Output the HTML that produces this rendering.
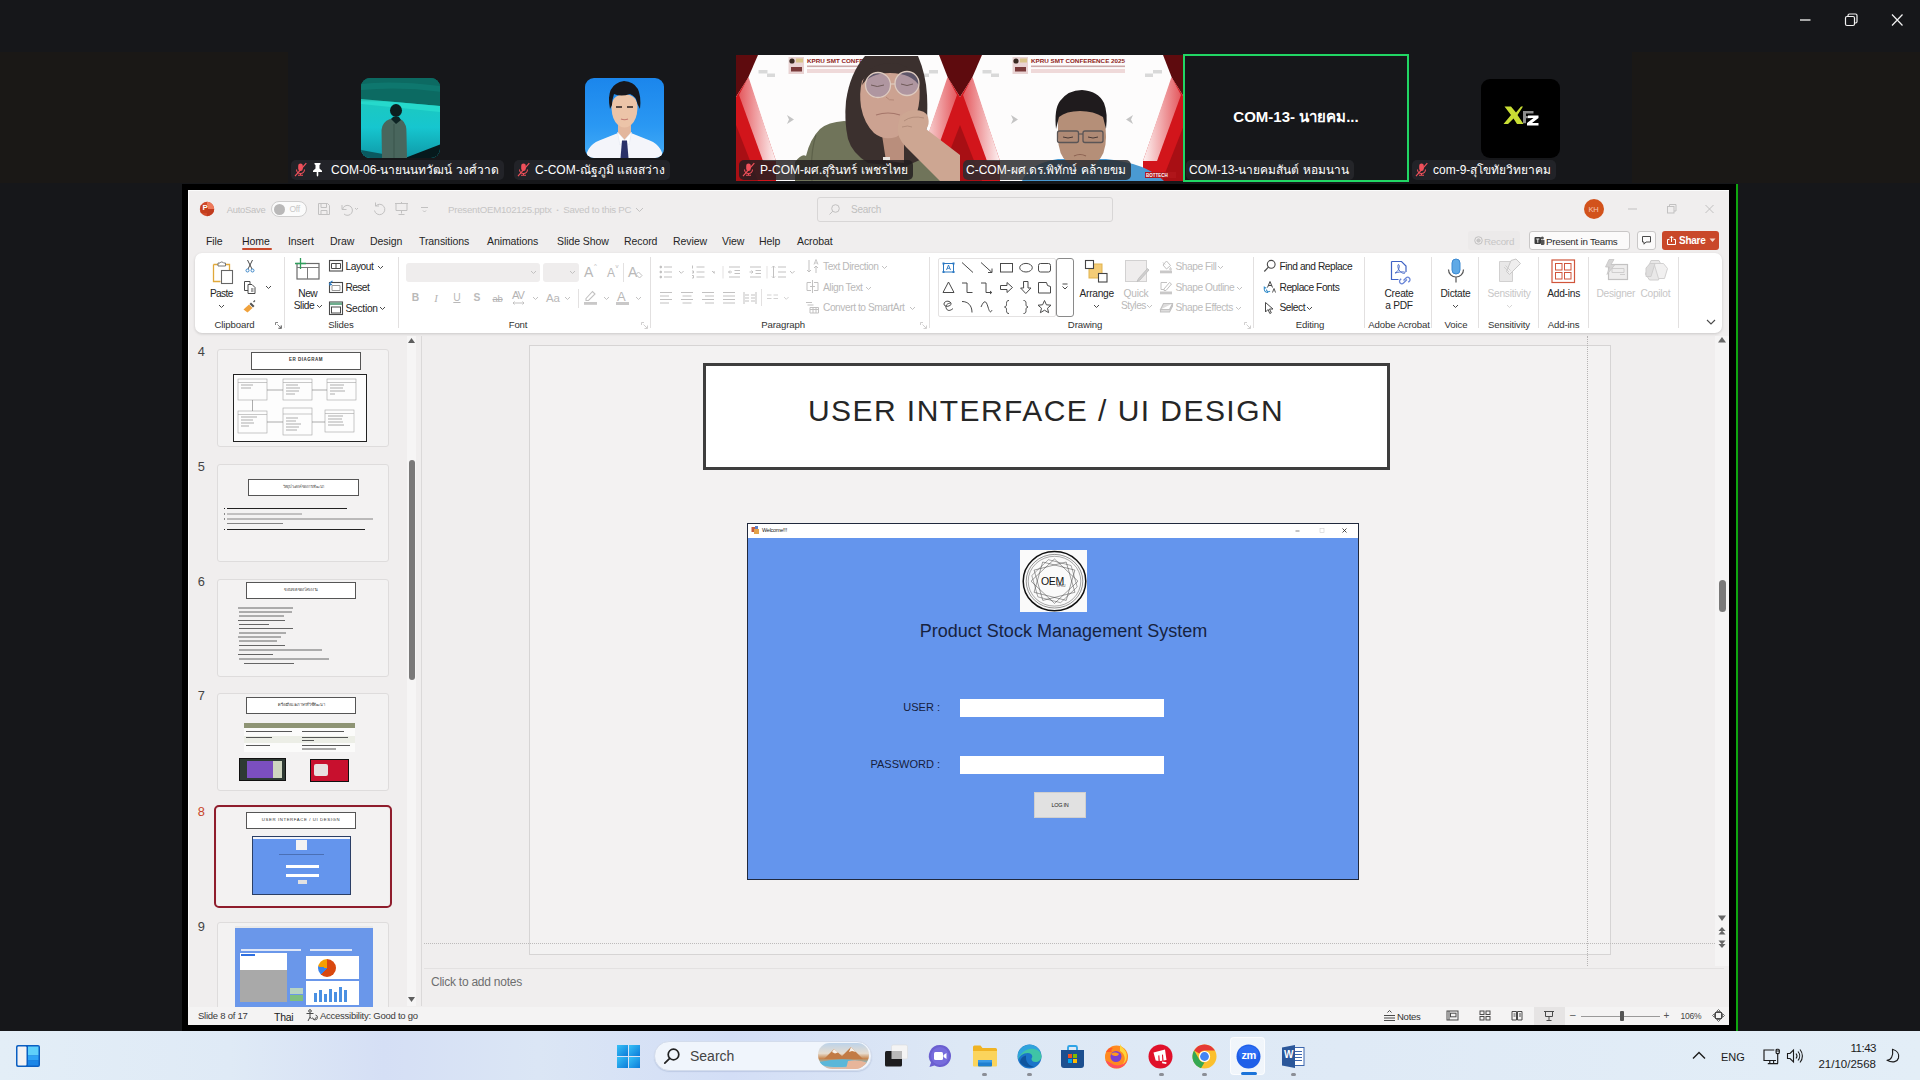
<!DOCTYPE html>
<html lang="th">
<head>
<meta charset="utf-8">
<title>Zoom Meeting</title>
<style>
*{box-sizing:border-box;margin:0;padding:0}
html,body{width:1920px;height:1080px;overflow:hidden;background:#16171a}
body{position:relative;font-family:"Liberation Sans","Noto Sans CJK SC",sans-serif;color:#222;-webkit-font-smoothing:antialiased}
.abs{position:absolute}
.t{position:absolute;white-space:nowrap;line-height:1}
svg{position:absolute;overflow:visible}
/* zoom */
.brown{position:absolute;background:#1a1816}
.nm{position:absolute;height:20px;border-radius:5px;background:rgba(36,37,41,.92);color:#fff;font-size:12px;line-height:20px;white-space:nowrap;padding:0 5px 0 3px}
.nm svg{position:relative;display:inline-block;vertical-align:-3px;margin-right:5px}
.av{position:absolute;width:80px;height:80px;border-radius:9px;overflow:hidden}
/* ppt */
#ppt{position:absolute;left:188px;top:190px;width:1541px;height:835px;background:#f0eeee;box-shadow:inset 1px 1px 0 #fbfbfb;overflow:hidden;font-size:10.5px;color:#2a2a2a}
#ppt .t{font-size:10.2px;color:#262626;letter-spacing:-.25px}
#ppt .g{color:#b9b8b8}
#ppt .lbl{color:#333;font-size:9.6px;letter-spacing:-.12px}
.sep{position:absolute;width:1px;background:#e2e0e0;top:67px;height:71px}
.ic{stroke:#4a4a4a;fill:none;stroke-width:1}
.icg{stroke:#c2c1c1;fill:none;stroke-width:1}
.thumb{position:absolute;left:29px;width:172px;height:98px;background:#f3f2f2;border:1px solid #dedcdc;border-radius:3px;overflow:hidden}
.tn{position:absolute;left:9.800px;font-size:12.800px;line-height:1;color:#444;margin-top:-.3px}
.c{transform:translateX(-50%)}
.chev{position:absolute;width:5px;height:5px}
/* taskbar */
#tb{position:absolute;left:0;top:1031px;width:1920px;height:49px;background:linear-gradient(90deg,#e3eef7 0%,#dfeaf6 12%,#d5dff5 20%,#dbe6f5 28%,#d3def6 38%,#dde8f5 50%,#dfeaf6 70%,#e3eef7 100%)}
#tb .t{color:#1b1b1b;font-size:12px}
</style>
</head>
<body>
<!-- ===== Zoom window chrome ===== -->
<div class="brown" style="left:0;top:52px;width:288px;height:131px"></div>
<div class="brown" style="left:1632px;top:52px;width:288px;height:131px"></div>
<svg style="left:1790px;top:8px" width="124" height="26" viewBox="0 0 124 26">
  <line x1="10" y1="12" x2="20.5" y2="12" stroke="#e6e6e6" stroke-width="1.4"/>
  <rect x="55.5" y="8.5" width="9" height="9" rx="1.5" fill="none" stroke="#f2f2f2" stroke-width="1.2"/>
  <path d="M58 8.5V7.5a1.5 1.5 0 0 1 1.5-1.5H65.5A1.5 1.5 0 0 1 67 7.500V13.5a1.500 1.500 0 0 1-1.500 1.500H64.500" fill="none" stroke="#f2f2f2" stroke-width="1.200"/>
  <path d="M102 6.500 112.500 17.500M112.500 6.500 102 17.500" stroke="#f2f2f2" stroke-width="1.200"/>
</svg>

<!-- tile 1 : aquarium avatar -->
<div class="av" style="left:361px;top:78px;width:79px;background:#0c6a62">
  <svg style="left:0;top:0" width="80" height="80" viewBox="0 0 80 80">
    <defs><linearGradient id="aq" x1="0" y1="0" x2="0" y2="1"><stop offset="0" stop-color="#0b5f59"/><stop offset=".28" stop-color="#0f8076"/><stop offset=".3" stop-color="#1cc9c0"/><stop offset=".62" stop-color="#16c6cf"/><stop offset="1" stop-color="#0f9aa8"/></linearGradient></defs>
    <rect width="80" height="80" fill="url(#aq)"/>
    <path d="M0 0H80V28L0 21Z" fill="#0c6a62"/><path d="M0 6Q30 2 80 8V14Q40 8 0 12Z" fill="#118176" opacity=".6"/>
    <path d="M0 21 80 28V34L0 26Z" fill="#2be0d0" opacity=".7"/>
    <path d="M0 72 44 80H0Z" fill="#0a5a60"/><path d="M44 80 80 66V80Z" fill="#06191c"/>
    <ellipse cx="35" cy="32.500" rx="6" ry="6.500" fill="#0c1f1f"/>
    <path d="M21 80 20.500 52Q21 44 29 41L35 40 41 42Q46 46 45.500 56L46 80Z" fill="#49665d"/>
    <path d="M30 41 35 46 40 42 38 39H32Z" fill="#0e2424"/><path d="M33 46V80" stroke="#3a544d" stroke-width="1"/>
  </svg>
</div>
<div class="nm" style="left:291px;top:160px"><svg width="13" height="15" viewBox="0 0 13 15"><rect x="4.200" y="1.500" width="4.600" height="7.600" rx="2.300" fill="#f0505a"/><path d="M2.500 7.500a4 4 0 0 0 8 0M6.500 11.500v1.600M4 13.300h5" fill="none" stroke="#f0505a" stroke-width="1.100"/><path d="M1 14.200L12.300 1.200" stroke="#f0505a" stroke-width="1.200"/></svg><svg width="11" height="15" viewBox="0 0 11 15" style="margin-right:8px"><path d="M2.500 1h6v1.200l-1 .9v3.400l2.500 2.300v1.200H6.300v3.500l-.8 1.200-.8-1.200V10H1V8.800l2.500-2.300V3.100l-1-.9z" fill="#fff"/></svg>COM-06-นายนนทวัฒน์ วงศ์วาด</div>

<!-- tile 2 : ID photo avatar -->
<div class="av" style="left:585px;top:78px;width:79px;background:linear-gradient(180deg,#1b86ec 0%,#2a98f3 60%,#43abf6 100%)">
  <svg style="left:0;top:0" width="80" height="80" viewBox="0 0 80 80">
    <path d="M1 80Q2 66 18 61L33 55H46L61 61Q77 66 78 80Z" fill="#f4f5fa"/>
    <path d="M33 44H46V55L39.500 62 33 55Z" fill="#e3b79d"/>
    <path d="M26.500 30Q26 17 39.500 16 53 17 52.500 30 52 42 46 47 39.500 52 33 47 27 42 26.500 30Z" fill="#ecc4a8"/>
    <path d="M25 31Q20 6 39 3 58 4 55 31L52.500 26Q51 18 45 16 36 19 29 16 27 22 27 27Z" fill="#17171c"/>
    <path d="M31 29h6M42 29h6" stroke="#2a2020" stroke-width="1.300"/><path d="M36 41q3.500 1.500 7 0" fill="none" stroke="#c47a70" stroke-width="1.200"/>
    <path d="M32.500 54 39.500 62 35 67ZM46.500 54 39.500 62 44 67Z" fill="#fff" stroke="#dfe2ee" stroke-width=".5"/>
    <path d="M37 62.500H42L43.500 80H35.500Z" fill="#2a3168"/>
  </svg>
</div>
<div class="nm" style="left:514px;top:160px"><svg width="13" height="15" viewBox="0 0 13 15"><rect x="4.200" y="1.500" width="4.600" height="7.600" rx="2.300" fill="#f0505a"/><path d="M2.500 7.500a4 4 0 0 0 8 0M6.500 11.500v1.600M4 13.300h5" fill="none" stroke="#f0505a" stroke-width="1.100"/><path d="M1 14.200L12.300 1.200" stroke="#f0505a" stroke-width="1.200"/></svg>C-COM-ณัฐภูมิ แสงสว่าง</div>

<!-- tile 3 : video (woman) -->
<div class="abs" style="left:736px;top:55px;width:224px;height:126px;background:#fbfbfb;overflow:hidden">
  <svg style="left:0;top:0" width="224" height="126" viewBox="0 0 224 126">
    <defs><linearGradient id="pka" x1="0" y1="0" x2="1" y2="0"><stop offset="0" stop-color="#fdf3f3"/><stop offset="1" stop-color="#e4585d"/></linearGradient><linearGradient id="pkra" x1="1" y1="0" x2="0" y2="0"><stop offset="0" stop-color="#fdf3f3"/><stop offset="1" stop-color="#e4585d"/></linearGradient></defs>
    <rect width="224" height="126" fill="#fdfcfc"/>
    <path d="M0 0H22L12 23 0 42Z" fill="#5e0b0e"/><path d="M0 42 12 23 40 106V126H0Z" fill="#d2151b"/><path d="M3 40 12.500 22 40 106H27Z" fill="url(#pkra)"/><path d="M0 70 22 126H0Z" fill="#a80f14"/>
    <path d="M224 0H203L212 23 224 42Z" fill="#5e0b0e"/><path d="M224 42 212 23 183 106V126H224Z" fill="#d2151b"/><path d="M221 40 211.500 22 183 106H197Z" fill="url(#pka)"/><path d="M224 70 202 126H224Z" fill="#a80f14"/>
    <rect x="52.500" y="2" width="15.500" height="17" fill="#e9d3d3"/><circle cx="56" cy="6" r="2.600" fill="#3a2a22"/><rect x="60" y="3.500" width="7" height="4" fill="#d9c48a"/><rect x="55" y="12" width="11" height="4.500" fill="#7a3a3a"/>
    <text x="71" y="8.300" font-size="6.200" font-weight="700" fill="#8e1d20" font-family="Liberation Sans, sans-serif" textLength="94" lengthAdjust="spacingAndGlyphs">KPRU SMT CONFERENCE 2025</text>
    <rect x="71" y="10.500" width="94" height="1.600" fill="#caa"/><rect x="71" y="14" width="94" height="4" fill="#efd9d9"/>
    <rect x="22.500" y="15" width="9" height="3.500" fill="#d9d9d9"/><rect x="31" y="18.500" width="8" height="3.500" fill="#d9d9d9"/><rect x="193" y="15" width="9" height="3.500" fill="#d9d9d9"/><rect x="185" y="18.500" width="8" height="3.500" fill="#d9d9d9"/>
    <path d="M51 60l7 4.500-7 4.500 2-4.500z" fill="#c4c4c4"/>
    <!-- woman -->
    <path d="M59 126V107Q66 98 70 101 74 84 84 74 92 67 108 66L150 70 224 108V126Z" fill="#70745a"/>
    <path d="M80 80Q74 98 76 126" fill="none" stroke="#5d614a" stroke-width="1.200"/>
    <path d="M129 1H182Q190 20 191 40 192 60 190 78L186 104 168 112 132 108Q116 98 112 84 108 66 110 46 114 18 129 1Z" fill="#3b302e"/>
    <path d="M146 80H168V108L150 106Z" fill="#b98e7c"/><path d="M147 102h7v3h-7z" fill="#e9e6e2"/>
    <path d="M126 26Q134 14 154 15 176 14 183 28 185 44 181 58 174 76 160 82 148 86 138 78 128 68 125 52 123 38 126 26Z" fill="#cca291"/>
    <path d="M126 30Q130 8 156 8 180 10 184 32 176 18 154 18 134 18 126 30Z" fill="#3b302e"/>
    <path d="M140 60Q152 56 164 60" fill="none" stroke="#a5766a" stroke-width="1.200"/><path d="M150 42q3 4 8 3" fill="none" stroke="#b48878" stroke-width="1"/>
    <circle cx="142" cy="30" r="12.500" fill="#8c88b4" fill-opacity=".45" stroke="#decbc0" stroke-width="1.300"/><circle cx="171" cy="28.500" r="12" fill="#8c88b4" fill-opacity=".45" stroke="#decbc0" stroke-width="1.300"/><path d="M154.500 29h4.500" stroke="#decbc0" stroke-width="1.200"/>
    <path d="M135 30q6 3 13 0M165 29q6 3 12 0" fill="none" stroke="#6f5a58" stroke-width="1"/>
    <path d="M164 62Q168 56 178 55 190 55 192 62 194 70 190 74L224 100V126H204L170 92Q160 82 162 70Z" fill="#cda692"/>
    <path d="M168 66q8-6 20-3M166 72q6-2 10 0" fill="none" stroke="#b08a78" stroke-width=".9"/>
  </svg>
</div>
<div class="nm" style="left:739px;top:160px;background:rgba(34,30,32,.84)"><svg width="13" height="15" viewBox="0 0 13 15"><rect x="4.200" y="1.500" width="4.600" height="7.600" rx="2.300" fill="#f0505a"/><path d="M2.500 7.500a4 4 0 0 0 8 0M6.500 11.500v1.600M4 13.300h5" fill="none" stroke="#f0505a" stroke-width="1.100"/><path d="M1 14.200L12.300 1.200" stroke="#f0505a" stroke-width="1.200"/></svg>P-COM-ผศ.สุรินทร์ เพชรไทย</div>

<!-- tile 4 : video (man) -->
<div class="abs" style="left:960px;top:55px;width:223px;height:126px;background:#fbfbfb;overflow:hidden">
  <svg style="left:0;top:0" width="224" height="126" viewBox="0 0 224 126">
    <defs><linearGradient id="pkb" x1="0" y1="0" x2="1" y2="0"><stop offset="0" stop-color="#fdf3f3"/><stop offset="1" stop-color="#e4585d"/></linearGradient><linearGradient id="pkrb" x1="1" y1="0" x2="0" y2="0"><stop offset="0" stop-color="#fdf3f3"/><stop offset="1" stop-color="#e4585d"/></linearGradient></defs>
    <rect width="224" height="126" fill="#fdfcfc"/>
    <path d="M0 0H22L12 23 0 42Z" fill="#5e0b0e"/><path d="M0 42 12 23 40 106V126H0Z" fill="#d2151b"/><path d="M3 40 12.500 22 40 106H27Z" fill="url(#pkrb)"/><path d="M0 70 22 126H0Z" fill="#a80f14"/>
    <path d="M224 0H203L212 23 224 42Z" fill="#5e0b0e"/><path d="M224 42 212 23 183 106V126H224Z" fill="#d2151b"/><path d="M221 40 211.500 22 183 106H197Z" fill="url(#pkb)"/><path d="M224 70 202 126H224Z" fill="#a80f14"/>
    <rect x="52.500" y="2" width="15.500" height="17" fill="#e9d3d3"/><circle cx="56" cy="6" r="2.600" fill="#3a2a22"/><rect x="60" y="3.500" width="7" height="4" fill="#d9c48a"/><rect x="55" y="12" width="11" height="4.500" fill="#7a3a3a"/>
    <text x="71" y="8.300" font-size="6.200" font-weight="700" fill="#8e1d20" font-family="Liberation Sans, sans-serif" textLength="94" lengthAdjust="spacingAndGlyphs">KPRU SMT CONFERENCE 2025</text>
    <rect x="71" y="10.500" width="94" height="1.600" fill="#caa"/><rect x="71" y="14" width="94" height="4" fill="#efd9d9"/>
    <rect x="22.500" y="15" width="9" height="3.500" fill="#d9d9d9"/><rect x="31" y="18.500" width="8" height="3.500" fill="#d9d9d9"/><rect x="193" y="15" width="9" height="3.500" fill="#d9d9d9"/><rect x="185" y="18.500" width="8" height="3.500" fill="#d9d9d9"/>
    <path d="M51 60l7 4.500-7 4.500 2-4.500z" fill="#c4c4c4"/>
    <path d="M173 60l-7 4.500 7 4.500-2-4.500z" fill="#c4c4c4"/>
    <!-- man -->
    <path d="M62 126Q70 108 98 104H146Q186 108 204 126Z" fill="#4a9ad2"/>
    <path d="M98 60Q98 44 121 44 144 44 145 60L146 82Q146 100 136 108 122 116 108 108 98 100 98 82Z" fill="#b58f78"/>
    <path d="M96 74Q94 54 100 46 108 35 122 35 138 36 144 48 148 58 146 74L143 62Q134 56 120 56 106 56 99 62Z" fill="#1f1b1d"/>
    <rect x="97.500" y="76" width="21" height="11.500" rx="2" fill="#a98672" fill-opacity=".5" stroke="#5a5556" stroke-width="1.300"/><rect x="123" y="76" width="20" height="11.500" rx="2" fill="#a98672" fill-opacity=".5" stroke="#5a5556" stroke-width="1.300"/><path d="M118.500 79h4.500" stroke="#5a5556" stroke-width="1.200"/>
    <path d="M103 82q5 2 10 0M128 82q5 2 10 0" fill="none" stroke="#4a3a36" stroke-width="1"/><path d="M114 101q6-3 12 0" fill="none" stroke="#8c6252" stroke-width="1.200"/>
    <rect x="185" y="117" width="31" height="6" fill="#b0151a"/><text x="186" y="122" font-size="4.500" font-weight="700" fill="#fff" font-family="Liberation Sans, sans-serif">BOTTECH</text>
  </svg>
</div>
<div class="nm" style="left:963px;top:160px;background:rgba(44,44,48,.86)">C-COM-ผศ.ดร.พิทักษ์ คล้ายขม</div>

<!-- tile 5 : active speaker -->
<div class="abs" style="left:1183px;top:54px;width:226px;height:128px;border:2px solid #21d664;background:#16171a"></div>
<div class="t" style="left:1183px;top:109px;width:226px;text-align:center;color:#fff;font-weight:700;font-size:15px">COM-13- นายคม...</div>
<div class="nm" style="left:1186px;top:160px;background:rgba(38,39,43,.9)">COM-13-นายคมสันต์ หอมนาน</div>

<!-- tile 6 : logo avatar -->
<div class="av" style="left:1481px;top:78.500px;width:79px;height:79px;background:#000">
  <svg style="left:0;top:0" width="80" height="80" viewBox="0 0 80 80">
    <path d="M23.500 27.500h6.500l5 6 5-6h2l-5.500 8.500 6 9h-6.500l-3.500-5.500-5.500 5.500h-4.500l7.500-9z" fill="#c9de34"/>
    <path d="M42 32h10.500v2.500h-7.500v2.500h5v2.300h-5v5h-3z" fill="#8c8c8c"/>
    <path d="M47 36.500h10.500v2.500l-6.500 5h6.500v2.600h-11.500v-2.600l6.500-5h-5.500z" fill="#fff"/>
  </svg>
</div>
<div class="nm" style="left:1412px;top:160px"><svg width="13" height="15" viewBox="0 0 13 15"><rect x="4.200" y="1.500" width="4.600" height="7.600" rx="2.300" fill="#f0505a"/><path d="M2.500 7.500a4 4 0 0 0 8 0M6.500 11.500v1.600M4 13.300h5" fill="none" stroke="#f0505a" stroke-width="1.100"/><path d="M1 14.200L12.300 1.200" stroke="#f0505a" stroke-width="1.200"/></svg>com-9-สุโขทัยวิทยาคม</div>

<!-- shared-screen frame -->
<div class="abs" style="left:182px;top:184px;width:1554px;height:847px;background:#000"></div>
<div class="abs" style="left:1736px;top:184px;width:2px;height:847px;background:#0fa60f"></div>
<!-- ===== PowerPoint window ===== -->
<div id="ppt">
<!-- title bar -->
<svg style="left:11px;top:11px" width="16" height="16" viewBox="0 0 16 16"><circle cx="8" cy="8" r="7.200" fill="#d04a2a"/><path d="M8 .8a7.200 7.200 0 0 1 7.200 7.200H8z" fill="#ee7a5b"/><path d="M8 8h7.200A7.200 7.200 0 0 1 8 15.200z" fill="#c13b1e"/><rect x="1.500" y="4" width="7.500" height="8" rx="1" fill="#c43e1c"/></svg>
<div class="t" style="left:14.500px;top:13.500px;font-size:8px;font-weight:700;color:#fff">P</div>
<div class="t g" style="left:38.700px;top:14.500px;font-size:9.400px;color:#c1c0c0">AutoSave</div>
<div class="abs" style="left:83px;top:11px;width:36px;height:16px;border-radius:8px;border:1px solid #cfcece;background:#fbfbfb"></div>
<div class="abs" style="left:86px;top:13.500px;width:11px;height:11px;border-radius:5.500px;background:#b9b8b8"></div>
<div class="t g" style="left:101.500px;top:15px;font-size:8.500px;color:#c9c8c8">Off</div>
<svg style="left:129px;top:11px" width="130" height="17" viewBox="0 0 130 17" class="icg">
  <path d="M1.500 2.500h9l2 2v9h-11zM4 2.500v4h5.500v-4M4 13.500v-4h6v4"/>
  <path d="M25 4v4.500h4.500M25.500 8.500a5 5 0 1 1 1.500 4.500"/><path d="M38 7l1.500 1.500L41 7"/>
  <path d="M58.500 1.500v3.500h3.500M58.700 5a5.200 5.200 0 1 1-1.200 4.500"/>
  <path d="M78 2.500h13M79 2.500v7h11v-7M84.500 9.500v3M81.500 13.500h6M84.500 1v1.500"/>
  <path d="M104 6.500h7M106 9.500l1.500 1.500 1.500-1.500"/>
</svg>
<div class="t g" style="left:260px;top:15px;font-size:9.700px;color:#c6c5c5">PresentOEM102125.pptx &nbsp;<span style="font-size:6px;vertical-align:1.500px">•</span>&nbsp; Saved to this PC</div>
<svg style="left:447px;top:16px" width="10" height="8" viewBox="0 0 10 8" class="icg"><path d="M1 2l3.500 3.500L8 2"/></svg>
<div class="abs" style="left:629px;top:7px;width:296px;height:25px;border:1px solid #d8d6d6;border-radius:3px;background:#f0eeee"></div>
<svg style="left:640px;top:13px" width="13" height="13" viewBox="0 0 13 13" class="icg"><circle cx="7.500" cy="5.500" r="3.800"/><path d="M4.800 8.200L1.500 11.500"/></svg>
<div class="t g" style="left:663px;top:14.500px;font-size:10px;color:#c0bfbf">Search</div>
<div class="abs" style="left:1396px;top:9px;width:20px;height:20px;border-radius:10px;background:#d2521b"></div>
<div class="t" style="left:1400.500px;top:15.500px;font-size:7.500px;color:#f5c7b3">KH</div>
<svg style="left:1436px;top:12px" width="100" height="14" viewBox="0 0 100 14" class="icg"><path d="M4 7h9"/><rect x="43.500" y="4.500" width="6.500" height="6.500"/><path d="M45.500 4.500v-2h6.500v6.500h-2"/><path d="M81.500 3l8 8M89.500 3l-8 8"/></svg>

<!-- tabs -->
<div class="t" style="left:18px;top:46px;font-size:10.500px;letter-spacing:-.08px">File</div>
<div class="t" style="left:54px;top:46px;font-size:10.500px;letter-spacing:-.08px;color:#1d1d1d">Home</div>
<div class="abs" style="left:54px;top:58px;width:30px;height:2px;background:#c8492b;border-radius:1px"></div>
<div class="t" style="left:100px;top:46px;font-size:10.500px;letter-spacing:-.08px">Insert</div>
<div class="t" style="left:142px;top:46px;font-size:10.500px;letter-spacing:-.08px">Draw</div>
<div class="t" style="left:182px;top:46px;font-size:10.500px;letter-spacing:-.08px">Design</div>
<div class="t" style="left:231px;top:46px;font-size:10.500px;letter-spacing:-.08px">Transitions</div>
<div class="t" style="left:299px;top:46px;font-size:10.500px;letter-spacing:-.08px">Animations</div>
<div class="t" style="left:369px;top:46px;font-size:10.500px;letter-spacing:-.08px">Slide Show</div>
<div class="t" style="left:436px;top:46px;font-size:10.500px;letter-spacing:-.08px">Record</div>
<div class="t" style="left:485px;top:46px;font-size:10.500px;letter-spacing:-.08px">Review</div>
<div class="t" style="left:534px;top:46px;font-size:10.500px;letter-spacing:-.08px">View</div>
<div class="t" style="left:571px;top:46px;font-size:10.500px;letter-spacing:-.08px">Help</div>
<div class="t" style="left:609px;top:46px;font-size:10.500px;letter-spacing:-.08px">Acrobat</div>

<!-- right-hand buttons -->
<div class="abs" style="left:1280px;top:41px;width:52px;height:19px;border-radius:3px;background:#eceaea"></div>
<svg style="left:1286px;top:46px" width="9" height="9" viewBox="0 0 9 9" class="icg"><circle cx="4.500" cy="4.500" r="3.800"/><circle cx="4.500" cy="4.500" r="1.600" fill="#c8c7c7"/></svg>
<div class="t g" style="left:1296px;top:46.500px;font-size:9.800px;color:#c6c5c5">Record</div>
<div class="abs" style="left:1341px;top:41px;width:101px;height:19px;border:1px solid #c9c7c7;border-radius:3px;background:#fbfafa"></div>
<svg style="left:1346px;top:45px" width="11" height="11" viewBox="0 0 11 11"><rect x=".5" y="2" width="6.500" height="7" rx="1" fill="#3c3c3c"/><circle cx="8.300" cy="3" r="1.600" fill="#555"/><path d="M7 5h3.500v3.500a1.500 1.500 0 0 1-1.500 1.500H7z" fill="#555"/><path d="M2.300 4h3M3.800 4v3.800" stroke="#fff" stroke-width=".9"/></svg>
<div class="t" style="left:1358px;top:46.500px;font-size:9.800px;color:#2b2b2b">Present in Teams</div>
<div class="abs" style="left:1449px;top:41px;width:19px;height:19px;border:1px solid #c9c7c7;border-radius:3px;background:#fbfafa"></div>
<svg style="left:1453px;top:45px" width="11" height="11" viewBox="0 0 11 11" class="ic"><path d="M1.500 1.500h8v5.500h-4.500l-2 2.200v-2.200h-1.500z"/></svg>
<div class="abs" style="left:1474px;top:41px;width:57px;height:19px;border-radius:3px;background:#c9482a"></div>
<svg style="left:1478px;top:45px" width="11" height="11" viewBox="0 0 11 11" fill="none" stroke="#fff" stroke-width="1"><path d="M3.500 4.500h-2v5h8v-5h-2M5.500 7v-5.500M3.500 3.200l2-2 2 2"/></svg>
<div class="t" style="left:1491px;top:46px;font-size:10px;color:#fff;font-weight:700">Share</div>
<svg style="left:1521px;top:48px" width="7" height="5" viewBox="0 0 7 5"><path d="M.5.5h6l-3 3.500z" fill="#f6d5cb"/></svg>

<!-- ribbon panel -->
<div class="abs" style="left:7px;top:63px;width:1527px;height:80px;background:#fff;border-radius:7px;box-shadow:0 1px 3px rgba(0,0,0,.16)"></div>
<div class="sep" style="left:96px"></div><div class="sep" style="left:210px"></div><div class="sep" style="left:462px"></div><div class="sep" style="left:741px"></div>
<div class="sep" style="left:1065px"></div><div class="sep" style="left:1176px"></div><div class="sep" style="left:1243px"></div><div class="sep" style="left:1290px"></div><div class="sep" style="left:1350px"></div><div class="sep" style="left:1400px"></div><div class="sep" style="left:1490px"></div>
<!-- Clipboard -->
<svg style="left:23px;top:69px" width="26" height="26" viewBox="0 0 26 26"><path d="M2.500 5.500h4.500M14 5.500h4.500v5.500M2.500 5.500v17h7" fill="none" stroke="#e0a83a" stroke-width="1.300"/><path d="M7 7v-3h2a2 2 0 0 1 3.500 0h2v3z" fill="#fff" stroke="#777" stroke-width="1"/><rect x="10.500" y="11.500" width="11" height="13" fill="#fff" stroke="#666" stroke-width="1.100"/></svg>
<div class="t c" style="left:33.300px;top:99.200px;letter-spacing:-.65px">Paste</div>
<svg style="left:30px;top:114px" width="7" height="5" viewBox="0 0 7 5" class="ic"><path d="M1 1l2.500 2.500L6 1"/></svg>
<svg style="left:55px;top:69px" width="14" height="15" viewBox="0 0 14 15" class="ic"><path d="M4.500 1l4.500 9M9.500 1l-4.500 9"/><circle cx="4.500" cy="11.500" r="1.500" stroke="#3b86c8"/><circle cx="9.500" cy="11.500" r="1.500" stroke="#3b86c8"/></svg>
<svg style="left:55px;top:90px" width="14" height="15" viewBox="0 0 14 15" class="ic"><path d="M1.500 1.500h5.500v9h-5.500z"/><path d="M5 4.500h4l3 3v6h-7z" fill="#fff"/><path d="M8 9h2.500M8 11h2.500"/></svg>
<svg style="left:77px;top:95px" width="7" height="5" viewBox="0 0 7 5" class="ic"><path d="M1 1l2.500 2.500L6 1"/></svg>
<svg style="left:54px;top:110px" width="15" height="15" viewBox="0 0 15 15"><path d="M9 2.500l3.500 3.500-1.500 1.500-3.500-3.500z" fill="#555"/><path d="M7 4.500l3.500 3.500-5 4.500-4-3z" fill="#f0a23c"/><path d="M11.500 2l1.500-1.500" stroke="#555" stroke-width="1.200"/></svg>
<div class="t c lbl" style="left:46.500px;top:129.900px">Clipboard</div>
<svg style="left:87px;top:132px" width="7" height="7" viewBox="0 0 7 7" class="ic" stroke-width=".8"><path d="M.5 3v-2.500h2.500M6.500 3.500v3h-3M2.500 2.500l3.500 3.500M6 3.500v2.500h-2.500" stroke="#666" stroke-width=".8" fill="none"/></svg>

<!-- Slides -->
<svg style="left:106px;top:67px" width="28" height="25" viewBox="0 0 28 25"><rect x="3" y="6.500" width="22" height="15.500" fill="#fff" stroke="#6a6a6a" stroke-width="1.200"/><path d="M3 10.500h22M13.500 10.500v11.500" stroke="#7a7a7a" stroke-width="1"/><path d="M6.500 1v11M1 6.500h11" stroke="#2f9e5b" stroke-width="1.300"/></svg>
<div class="t c" style="left:119.800px;top:98.800px;letter-spacing:-.5px">New</div>
<div class="t c" style="left:116px;top:111.300px;letter-spacing:-.4px">Slide</div>
<svg style="left:128px;top:114px" width="7" height="5" viewBox="0 0 7 5" class="ic"><path d="M1 1l2.500 2.500L6 1"/></svg>
<svg style="left:141px;top:70px" width="14" height="12" viewBox="0 0 14 12" class="ic"><rect x=".5" y=".5" width="13" height="10.500" stroke-width="1.100"/><path d="M2.500 3.500h9v5h-9zM7 3.500v5"/></svg>
<div class="t" style="left:157.500px;top:71.500px;letter-spacing:-.45px">Layout</div>
<svg style="left:189px;top:74.500px" width="7" height="5" viewBox="0 0 7 5" class="ic"><path d="M1 1l2.500 2.500L6 1"/></svg>
<svg style="left:141px;top:90px" width="14" height="13" viewBox="0 0 14 13" class="ic"><rect x=".5" y="2.500" width="13" height="10" stroke-width="1.100"/><path d="M3 5.500h8v5h-8z" stroke="#999"/><path d="M3.500 1a4 4 0 0 0-2.500 4M.3 2.800l.7 2.200 2-.8" stroke="#2f7ec6" stroke-width="1.100"/></svg>
<div class="t" style="left:157.500px;top:92.500px;letter-spacing:-.6px">Reset</div>
<svg style="left:141px;top:111px" width="14" height="14" viewBox="0 0 14 14" class="ic"><rect x=".5" y="1" width="13" height="12.500" stroke-width="1.100"/><rect x="1" y="1.500" width="12" height="2.500" fill="#6fae8e" stroke="none"/><rect x="2.500" y="6" width="9" height="6"/></svg>
<div class="t" style="left:157.500px;top:113.500px">Section</div>
<svg style="left:190.500px;top:116px" width="7" height="5" viewBox="0 0 7 5" class="ic"><path d="M1 1l2.500 2.500L6 1"/></svg>
<div class="t c lbl" style="left:153px;top:129.900px">Slides</div>

<!-- Font -->
<div class="abs" style="left:218px;top:72.500px;width:134px;height:19px;background:#efeded;border-radius:3px"></div>
<div class="abs" style="left:354.500px;top:72.500px;width:36.500px;height:19px;background:#efeded;border-radius:3px"></div>
<svg style="left:342px;top:80px" width="7" height="5" viewBox="0 0 7 5" class="icg"><path d="M1 1l2.500 2.500L6 1"/></svg>
<svg style="left:381px;top:80px" width="7" height="5" viewBox="0 0 7 5" class="icg"><path d="M1 1l2.500 2.500L6 1"/></svg>
<div class="t g" style="left:396px;top:75px;font-size:14px">A</div><div class="t g" style="left:406px;top:73px;font-size:6px">^</div>
<div class="t g" style="left:419px;top:77px;font-size:12px">A</div><div class="t g" style="left:427.500px;top:73px;font-size:6px">v</div>
<div class="abs" style="left:434.500px;top:73px;width:1px;height:19px;background:#e3e1e1"></div>
<div class="t g" style="left:440px;top:75px;font-size:14px">A</div>
<svg style="left:447px;top:81px" width="8" height="8" viewBox="0 0 8 8" class="icg"><path d="M3.500 1l3.500 3.500-2.500 2.500-3.500-3.500z"/></svg>
<div class="t g" style="left:223.800px;top:102.800px;font-size:10.300px;font-weight:700;color:#b9b8b8">B</div>
<div class="t g" style="left:246.300px;top:102.600px;font-size:10.800px;font-style:italic;font-family:'Liberation Serif',serif;color:#b5b4b4">I</div>
<div class="t g" style="left:265.300px;top:102.600px;font-size:10.300px;text-decoration:underline;color:#b9b8b8">U</div>
<div class="t g" style="left:285.600px;top:102.800px;font-size:10.300px;font-weight:700;color:#bcbbbb">S</div>
<div class="t g" style="left:304.500px;top:103.500px;font-size:9.500px;text-decoration:line-through;color:#b3b2b2">ab</div>
<div class="t g" style="left:324px;top:100px;font-size:11px;letter-spacing:-1px;color:#b3b2b2">AV</div>
<svg style="left:324px;top:111px" width="13" height="4" viewBox="0 0 13 4" class="icg"><path d="M1 2h11M2.500.5L1 2l1.500 1.500M10.500.5L12 2l-1.500 1.500"/></svg>
<svg style="left:344px;top:106px" width="7" height="5" viewBox="0 0 7 5" class="icg"><path d="M1 1l2.500 2.500L6 1"/></svg>
<div class="t g" style="left:358px;top:102.500px;font-size:11.500px;color:#b9b8b8">Aa</div>
<svg style="left:376px;top:106px" width="7" height="5" viewBox="0 0 7 5" class="icg"><path d="M1 1l2.500 2.500L6 1"/></svg>
<div class="abs" style="left:389.500px;top:99px;width:1px;height:19px;background:#e3e1e1"></div>
<svg style="left:395px;top:99px" width="15" height="17" viewBox="0 0 15 17" class="icg"><path d="M3 9.500l6.500-7 2.500 2.500-6.500 6.500h-2.500z" stroke-width="1.100"/><rect x="1" y="13" width="13" height="2.800" fill="#c9c8c8" stroke="none"/></svg>
<svg style="left:415px;top:106px" width="7" height="5" viewBox="0 0 7 5" class="icg"><path d="M1 1l2.500 2.500L6 1"/></svg>
<div class="t g" style="left:429px;top:99.500px;font-size:13px;color:#b9b8b8">A</div>
<div class="abs" style="left:427.500px;top:112px;width:13px;height:2.800px;background:#c9c8c8"></div>
<svg style="left:447px;top:106px" width="7" height="5" viewBox="0 0 7 5" class="icg"><path d="M1 1l2.500 2.500L6 1"/></svg>
<div class="t c lbl" style="left:330px;top:129.900px">Font</div>
<svg style="left:453px;top:132px" width="7" height="7" viewBox="0 0 7 7"><path d="M.5 3v-2.500h2.500M6.500 3.500v3h-3M2.500 2.500l3.500 3.500" stroke="#c4c3c3" stroke-width=".8" fill="none"/></svg>

<!-- Paragraph -->
<svg style="left:471px;top:75px" width="140" height="14" viewBox="0 0 140 14" class="icg">
  <path d="M5 2h8M5 7h8M5 12h8"/><circle cx="1.800" cy="2" r=".9" fill="#bbb"/><circle cx="1.800" cy="7" r=".9" fill="#bbb"/><circle cx="1.800" cy="12" r=".9" fill="#bbb"/><path d="M20 6l2.300 2.300L24.600 6"/>
  <path d="M37.500 2h8M37.500 7h8M37.500 12h8M33.500 .5v3M33 6h1.500v2h-1.500M33 10.500h1.500v2.500h-1.500"/><path d="M53 6l2.300 2.300L55 6"/>
  <path d="M64 1v12.500" stroke="#e3e1e1"/>
  <path d="M70 2h11M75.500 5.500h5.500M75.500 8.500h5.500M70 12h11M73 7h-3.500M71 5.500l-1.500 1.500 1.500 1.500"/>
  <path d="M91 2h11M96.500 5.500h5.500M96.500 8.500h5.500M91 12h11M90.500 7h3.500M92.500 5.500l1.500 1.500-1.500 1.500"/>
  <path d="M108 1v12.500" stroke="#e3e1e1"/>
  <path d="M119 2h8M119 7h8M119 12h8M114.500 1v12M113 2.500l1.500-1.500 1.500 1.500M113 11.500l1.500 1.500 1.500-1.500"/><path d="M131 6l2.300 2.300 2.300-2.300"/>
</svg>
<svg style="left:471px;top:101px" width="135" height="14" viewBox="0 0 135 14" class="icg">
  <path d="M1 1.500h12M1 5h9M1 8.500h12M1 12h9"/>
  <path d="M22 1.500h12M23.500 5h9M22 8.500h12M23.500 12h9"/>
  <path d="M43 1.500h12M46 5h9M43 8.500h12M46 12h9"/>
  <path d="M64 1.500h12M64 5h12M64 8.500h12M64 12h12"/>
  <path d="M85 1v12M97 1v12M86 4h4M92 4h4M86 7h4M92 7h4M86 10h4M92 10h4"/>
  <path d="M102.500 -2v17" stroke="#e3e1e1"/>
  <path d="M108 4h4.500M114.500 4h4.500M108 7.500h4.500M114.500 7.500h4.500" stroke="#d3d2d2"/><path d="M125 6l2.300 2.300 2.300-2.300" stroke="#d3d2d2"/>
</svg>
<svg style="left:618px;top:69px" width="13" height="15" viewBox="0 0 13 15" class="icg"><path d="M3 1v12M1 11l2 2 2-2M10 14v-7M8 9l2-2 2 2"/><path d="M8 5.500l2-5 2 5M8.700 4h2.600" stroke-width=".9"/></svg>
<div class="t g" style="left:635px;top:71.500px;color:#bab9b9;letter-spacing:-.45px">Text Direction</div>
<svg style="left:693px;top:74.500px" width="7" height="5" viewBox="0 0 7 5" class="icg"><path d="M1 1l2.500 2.500L6 1"/></svg>
<svg style="left:617px;top:89px" width="15" height="15" viewBox="0 0 15 15" class="icg"><path d="M2 3.500h4M9 3.500h4v8h-4M6 11.500h-4v-8M7.500 1v13M5 7.500h5"/></svg>
<div class="t g" style="left:635px;top:92.500px;color:#bab9b9;letter-spacing:-.45px">Align Text</div>
<svg style="left:677px;top:95.500px" width="7" height="5" viewBox="0 0 7 5" class="icg"><path d="M1 1l2.500 2.500L6 1"/></svg>
<svg style="left:617px;top:111px" width="15" height="13" viewBox="0 0 15 13" class="icg"><path d="M1 1.500h6M2.500 4h6M5 6.500h8.500v5.500h-8.500zM5 8.500h8.500M8 6.500v5.500M11 6.500v5.500" /></svg>
<div class="t g" style="left:635px;top:113px;color:#bab9b9;letter-spacing:-.45px">Convert to SmartArt</div>
<svg style="left:721px;top:116px" width="7" height="5" viewBox="0 0 7 5" class="icg"><path d="M1 1l2.500 2.500L6 1"/></svg>
<div class="t c lbl" style="left:595px;top:129.900px">Paragraph</div>
<svg style="left:732px;top:132px" width="7" height="7" viewBox="0 0 7 7"><path d="M.5 3v-2.500h2.500M6.500 3.500v3h-3M2.500 2.500l3.500 3.500" stroke="#c4c3c3" stroke-width=".8" fill="none"/></svg>
<!-- Drawing -->
<div class="abs" style="left:750px;top:68px;width:118px;height:59px;border:1px solid #e4e2e2;border-radius:2px;background:#fff"></div>
<div class="abs" style="left:867.500px;top:68px;width:18.500px;height:59px;border:1px solid #8a8a8a;border-radius:3px;background:#fff"></div>
<svg style="left:873px;top:93px" width="8" height="8" viewBox="0 0 8 8" class="ic"><path d="M1.500 1h5M1.500 3.500l2.500 2.500 2.500-2.500"/></svg>
<svg style="left:752px;top:70px" width="114" height="56" viewBox="0 0 114 56" class="ic" stroke="#3d3d3d">
  <!-- row1 -->
  <rect x="3.500" y="3.500" width="10" height="8.500" stroke="#2b78c2"/><path d="M6.500 10l2-5 2 5M7.200 8.300h2.600" stroke="#2b78c2" stroke-width=".9"/><g fill="#2b78c2" stroke="none"><rect x="2.500" y="2.500" width="2" height="2"/><rect x="12.500" y="2.500" width="2" height="2"/><rect x="2.500" y="11" width="2" height="2"/><rect x="12.500" y="11" width="2" height="2"/></g>
  <path d="M22 2.500l11 10"/>
  <path d="M41 2.500l11 10M52 8.500v4h-4"/>
  <rect x="60.500" y="3.500" width="12" height="8.500"/>
  <ellipse cx="86" cy="7.700" rx="6.300" ry="4.300"/>
  <rect x="98.500" y="3.500" width="12" height="8.500" rx="2"/>
  <!-- row2 -->
  <path d="M8.500 22l5.500 10.500h-11z"/>
  <path d="M22 23h5v9.500h5.500"/>
  <path d="M41 23h5v9.500h5.500M50 31l1.800 1.500-1.800 1.500"/>
  <path d="M60.500 25.500h6.500v-3l5.500 5-5.500 5v-3h-6.500z"/>
  <path d="M83.500 21.500h4.500v6.500h3l-5.200 5.500-5.200-5.500h3z"/>
  <path d="M98.500 22.500h8a4 4 0 0 0 4 4v6.500h-12z"/>
  <!-- row3 -->
  <path d="M11 43c-2-3-7-2-7 1s5 3 7 .5-6-1.500-5 3 5 3 7 1"/>
  <path d="M22 41.500c6 0 10 4 10 11"/>
  <path d="M41 47c3-7 5-7 7 0s3 5 4 3"/>
  <path d="M69 40.500c-2 0-2.500 1-2.500 3s0 3-2 3.500c2 .5 2 1.500 2 3.500s.5 3 2.500 3"/>
  <path d="M83.500 40.500c2 0 2.500 1 2.500 3s0 3 2 3.500c-2 .5-2 1.500-2 3.500s-.5 3-2.500 3"/>
  <path d="M104.500 40.500l1.900 4.300 4.600.4-3.500 3 1.100 4.500-4.100-2.500-4.100 2.500 1.100-4.500-3.500-3 4.600-.4z"/>
</svg>
<svg style="left:896px;top:69px" width="26" height="26" viewBox="0 0 26 26"><rect x="5" y="5" width="13" height="14" fill="#f4cc76" stroke="#e2b34e"/><rect x="1.500" y="1.500" width="8" height="8" fill="#fff" stroke="#444" stroke-width="1.100"/><rect x="14.500" y="14.500" width="8.500" height="8.500" fill="#fff" stroke="#444" stroke-width="1.100"/></svg>
<div class="t c" style="left:908.700px;top:98.500px">Arrange</div>
<svg style="left:905px;top:114px" width="7" height="5" viewBox="0 0 7 5" class="ic"><path d="M1 1l2.500 2.500L6 1"/></svg>
<svg style="left:936px;top:69px" width="27" height="26" viewBox="0 0 27 26"><rect x="1.500" y="1.500" width="21" height="21" fill="#efeded" stroke="#d2d1d1"/><path d="M23.500 9.500l1.500 1.500-9 10-3 1.500 1.500-3z" fill="#d0cfcf" stroke="#bdbcbc" stroke-width=".8"/></svg>
<div class="t c g" style="left:948px;top:98.500px">Quick</div>
<div class="t c g" style="left:945.500px;top:111px;letter-spacing:-.45px">Styles</div>
<svg style="left:958px;top:114px" width="7" height="5" viewBox="0 0 7 5" class="icg"><path d="M1 1l2.500 2.500L6 1"/></svg>
<svg style="left:971px;top:69px" width="14" height="15" viewBox="0 0 14 15" class="icg"><path d="M4 6l3.500-4 4 4.500-4 3.500zM4 3.500l2 2M11.500 8.500c1 1.500 1 2.500 0 2.500s-1-1 0-2.500" stroke-width="1"/><rect x="1" y="11.500" width="12" height="2.800" fill="#c9c8c8" stroke="none"/></svg>
<div class="t g" style="left:987.500px;top:71.500px;color:#bcbbbb;letter-spacing:-.45px">Shape Fill</div>
<svg style="left:1029px;top:74.500px" width="7" height="5" viewBox="0 0 7 5" class="icg"><path d="M1 1l2.500 2.500L6 1"/></svg>
<svg style="left:971px;top:90px" width="14" height="15" viewBox="0 0 14 15" class="icg"><path d="M2 2.500h6M2 2.500v7h3M5 9l5.500-6.500 2 1.500-5.500 6.500h-2z" stroke-width="1"/><rect x="1" y="11.500" width="12" height="2.800" fill="#c9c8c8" stroke="none"/></svg>
<div class="t g" style="left:987.500px;top:92.500px;color:#bcbbbb;letter-spacing:-.45px">Shape Outline</div>
<svg style="left:1048px;top:95.500px" width="7" height="5" viewBox="0 0 7 5" class="icg"><path d="M1 1l2.500 2.500L6 1"/></svg>
<svg style="left:971px;top:111px" width="15" height="14" viewBox="0 0 15 14" class="icg"><path d="M4.500 2.500h9l-3 6h-9zM1.500 8.500v2.500h9l3-6v-2.500" stroke-width="1.100" fill="#dddcdc"/></svg>
<div class="t g" style="left:987.500px;top:113px;color:#bcbbbb;letter-spacing:-.45px">Shape Effects</div>
<svg style="left:1046.500px;top:116px" width="7" height="5" viewBox="0 0 7 5" class="icg"><path d="M1 1l2.500 2.500L6 1"/></svg>
<div class="t c lbl" style="left:897px;top:129.900px">Drawing</div>
<svg style="left:1055.500px;top:132px" width="7" height="7" viewBox="0 0 7 7"><path d="M.5 3v-2.500h2.500M6.500 3.500v3h-3M2.500 2.500l3.500 3.500" stroke="#c4c3c3" stroke-width=".8" fill="none"/></svg>

<!-- Editing -->
<svg style="left:1075px;top:69px" width="14" height="14" viewBox="0 0 14 14" class="ic"><circle cx="8.200" cy="5.300" r="3.900" stroke-width="1.100"/><path d="M5.400 8.200L1.300 12.500" stroke-width="1.200"/></svg>
<div class="t" style="left:1091.500px;top:71.500px;letter-spacing:-.45px">Find and Replace</div>
<svg style="left:1075px;top:90px" width="14" height="14" viewBox="0 0 14 14"><path d="M4.500 7.500l2.500-6 2.500 6M5.400 5.500h3.200" fill="none" stroke="#444" stroke-width="1"/><path d="M9.500 12.500l1.500-4 1.500 4" fill="none" stroke="#444" stroke-width=".9"/><path d="M5 12.500a3.500 3.500 0 0 1-3.500-5M1 6.500l.6 1.800 1.700-.7M3.500 9.500a2 2 0 0 0 3.500 1.500" fill="none" stroke="#2f8ac8" stroke-width="1.100"/></svg>
<div class="t" style="left:1091.500px;top:92.500px;letter-spacing:-.45px">Replace Fonts</div>
<svg style="left:1076px;top:111px" width="11" height="14" viewBox="0 0 11 14" class="ic"><path d="M1.500 1.500v9.500l2.500-2.500 1.800 4 1.500-.7-1.800-3.800h3.500z" stroke-width="1"/></svg>
<div class="t" style="left:1091.500px;top:113px;letter-spacing:-.45px">Select</div>
<svg style="left:1118px;top:116px" width="7" height="5" viewBox="0 0 7 5" class="ic"><path d="M1 1l2.500 2.500L6 1"/></svg>
<div class="t c lbl" style="left:1122px;top:129.900px">Editing</div>

<!-- Adobe Acrobat -->
<svg style="left:1200px;top:69px" width="26" height="27" viewBox="0 0 26 27" fill="none"><path d="M3.500 2.500h10l4.500 4.500v6M3.500 2.500v18h7" stroke="#3f62c4" stroke-width="1.200"/><path d="M7 14c3-1 5-6 4-8s-2 2 0 5 5 4 6 3-3-2-10 0z" stroke="#3f62c4" stroke-width=".9"/><path d="M14.500 19.500l2.500-2.500a2.300 2.300 0 0 1 3.300 3.300l-1 1M18 18.500l-3.500 3.500a2.300 2.300 0 0 1-3.300-3.300l1-1" stroke="#6a86d8" stroke-width="1.300" transform="translate(1 2)"/></svg>
<div class="t c" style="left:1211px;top:98.500px">Create</div>
<div class="t c" style="left:1211px;top:111px">a PDF</div>
<div class="t c lbl" style="left:1211px;top:129.900px">Adobe Acrobat</div>

<!-- Voice -->
<svg style="left:1258px;top:68px" width="20" height="28" viewBox="0 0 20 28" fill="none"><rect x="6" y="1" width="8" height="15" rx="4" fill="#5fa9e6" stroke="#3c8ad2"/><path d="M2.500 11.500a7.500 7.500 0 0 0 15 0M10 19v5.500" stroke="#555" stroke-width="1.200"/></svg>
<div class="t c" style="left:1267.500px;top:98.500px">Dictate</div>
<svg style="left:1264px;top:114px" width="7" height="5" viewBox="0 0 7 5" class="ic"><path d="M1 1l2.500 2.500L6 1"/></svg>
<div class="t c lbl" style="left:1268px;top:129.900px">Voice</div>

<!-- Sensitivity -->
<svg style="left:1309px;top:68px" width="26" height="27" viewBox="0 0 26 27" fill="none"><path d="M2.500 3.500h13l0 20h-13z" fill="#e9e8e8" stroke="#d1d0d0"/><path d="M14 2.500l5-1.500 4.500 4.500-11 11-3-3z" fill="#efeeee" stroke="#c9c8c8"/><path d="M7 9l5 5M8.500 7.500l5 5" stroke="#d0cfcf"/></svg>
<div class="t c g" style="left:1321px;top:98.500px;color:#c7c6c6">Sensitivity</div>
<svg style="left:1317.500px;top:114px" width="7" height="5" viewBox="0 0 7 5" class="icg"><path d="M1 1l2.500 2.500L6 1" stroke="#d6d5d5"/></svg>
<div class="t c lbl" style="left:1321px;top:129.900px">Sensitivity</div>

<!-- Add-ins -->
<svg style="left:1363px;top:69px" width="25" height="25" viewBox="0 0 25 25" fill="none" stroke="#d0553b"><rect x="1" y="1" width="22.500" height="22.500" stroke-width="1.200"/><rect x="4.500" y="4.500" width="6.500" height="6.500"/><rect x="13.500" y="4.500" width="6.500" height="6.500"/><rect x="4.500" y="13.500" width="6.500" height="6.500"/><rect x="13.500" y="13.500" width="6.500" height="6.500"/></svg>
<div class="t c" style="left:1375.600px;top:98.500px">Add-ins</div>
<div class="t c lbl" style="left:1375.600px;top:129.900px">Add-ins</div>

<!-- Designer / Copilot -->
<svg style="left:1415px;top:68px" width="26" height="27" viewBox="0 0 26 27" fill="none"><rect x="5.500" y="6.500" width="19" height="15" fill="#eeeded" stroke="#c3c2c2" stroke-width="1.200"/><path d="M9 10.500h12v4h-12zM17 16.500h5" stroke="#cfcece"/><path d="M6 1.500l5 0-3 5h4l-8 10 2.500-7.500h-4z" fill="#d6d5d5" stroke="#c6c5c5" stroke-width=".8"/></svg>
<div class="t c g" style="left:1427.800px;top:98.500px;color:#c7c6c6">Designer</div>
<svg style="left:1454px;top:68px" width="28" height="27" viewBox="0 0 28 27" fill="none"><path d="M9 2.500h8l3 6-3.500 13.500h-9l-4-6z" fill="#e9e8e8" stroke="#cfcece"/><path d="M12 5.500h9.500l4 5-3 10h-6z" fill="#f1f0f0" stroke="#d2d1d1"/><path d="M4 10l4-4.500h5l-4 13h-5z" fill="#dedddd" stroke="#cfcece"/></svg>
<div class="t c g" style="left:1467.400px;top:98.500px;color:#c7c6c6">Copilot</div>
<svg style="left:1518px;top:129px" width="10" height="7" viewBox="0 0 10 7" class="ic"><path d="M1 1l4 4 4-4" stroke-width="1.100"/></svg>
<!-- ===== thumbnail panel ===== -->
<div class="abs" style="left:219px;top:146px;width:9px;height:670px;background:#f6f5f5"></div>
<div class="abs" style="left:232.500px;top:146px;width:1px;height:670px;background:#dbd9d9"></div>
<svg style="left:219px;top:147px" width="9" height="7" viewBox="0 0 9 7"><path d="M4.500 1l3.500 5h-7z" fill="#5e5e5e"/></svg>
<svg style="left:219px;top:806px" width="9" height="7" viewBox="0 0 9 7"><path d="M4.500 6l3.500-5h-7z" fill="#5e5e5e"/></svg>
<div class="abs" style="left:220.500px;top:270px;width:6.500px;height:220px;border-radius:3.500px;background:#7a7979"></div>

<div class="tn" style="top:156px">4</div>
<div class="thumb" style="top:158.500px">
  <div class="abs" style="left:33px;top:2px;width:110px;height:18px;border:1px solid #555;background:#fff"></div>
  <div class="t" style="left:33px;top:8.500px;width:110px;text-align:center;font-size:4.500px;letter-spacing:.5px;color:#333;font-weight:700">ER DIAGRAM</div>
  <div class="abs" style="left:15px;top:24.500px;width:134px;height:67.500px;border:1px solid #222;background:#fdfdfd"></div>
  <svg style="left:15px;top:24.500px" width="134" height="67" viewBox="0 0 134 67" fill="none" stroke="#a5a5a5" stroke-width=".6">
    <rect x="5" y="5" width="29" height="21"/><rect x="50" y="5" width="29" height="21"/><rect x="94" y="5" width="29" height="21"/>
    <rect x="5" y="37" width="29" height="22"/><rect x="50" y="34" width="29" height="27"/><rect x="92" y="36" width="29" height="22"/>
    <path d="M5 8.500h29M50 8.500h29M94 8.500h29M5 40.500h29M50 40h29M92 39.500h29"/>
    <path d="M34 16h16M79 16h15M19.500 26v11M34 48h16M79 48h13" stroke="#777"/>
    <path d="M8 11h12M8 14h10M53 11h12M53 14h14M53 17h13M53 20h9M97 11h14M97 14h13M97 17h15M97 20h5M8 43h16M8 46h12M8 49h13M8 52h8M53 44h12M53 47h10M53 50h15M53 53h13M53 56h11M95 42h15M95 45h14M95 48h15M95 51h16" stroke="#8a8a8a" stroke-width=".7"/>
  </svg>
</div>

<div class="tn" style="top:271px">5</div>
<div class="thumb" style="top:273.500px">
  <div class="abs" style="left:30px;top:14px;width:111px;height:17.500px;border:1px solid #555;background:#fff"></div>
  <div class="t" style="left:30px;top:20.500px;width:111px;text-align:center;font-size:4px;color:#555">วัตถุประสงค์ของการพัฒนา</div>
  <svg style="left:0;top:0" width="172" height="98" viewBox="0 0 172 98" fill="none" stroke="#333" stroke-width="1.100">
    <path d="M9 43.500h120" stroke="#222"/><path d="M9 49h75" stroke="#777" stroke-width=".8"/><path d="M9 54h146M9 58.500h56" stroke="#666" stroke-width=".8"/><path d="M9 64.500h138" stroke="#222"/>
    <path d="M6 43.500h1M6 49h1M6 54h1M6 64.500h1" stroke="#222"/>
  </svg>
</div>

<div class="tn" style="top:386px">6</div>
<div class="thumb" style="top:388.500px">
  <div class="abs" style="left:28px;top:2px;width:110px;height:17.500px;border:1px solid #555;background:#fff"></div>
  <div class="t" style="left:28px;top:8.500px;width:110px;text-align:center;font-size:4px;color:#444">ขอบเขตของโครงงาน</div>
  <svg style="left:0;top:0" width="172" height="98" viewBox="0 0 172 98" fill="none" stroke="#555" stroke-width=".9">
    <path d="M20 28h55M21 32h53M21 36h45M20 40.500h47M21 44.500h30M21 48.500h54M21 53h47M20 57h43M21 61h38M21 65.500h46M21 70h83M20 74.500h35M21 79h90M26 83.500h50"/>
  </svg>
</div>

<div class="tn" style="top:500px">7</div>
<div class="thumb" style="top:502.500px">
  <div class="abs" style="left:28px;top:3px;width:110px;height:17px;border:1px solid #555;background:#fff"></div>
  <div class="t" style="left:28px;top:9.500px;width:110px;text-align:center;font-size:4px;color:#444">เครื่องมือและภาษาที่ใช้พัฒนา</div>
  <div class="abs" style="left:26px;top:29px;width:111px;height:29px;background:#fbfbfa"></div>
  <div class="abs" style="left:26px;top:29px;width:111px;height:5px;background:#8e9474"></div>
  <div class="abs" style="left:26px;top:42px;width:111px;height:7px;background:#eceee6"></div>
  <svg style="left:0;top:0" width="172" height="98" viewBox="0 0 172 98" fill="none" stroke="#444" stroke-width=".9"><path d="M28 37.500h46M84 37.500h42M28 43.500h26M84 43.500h46M84 46.500h12M28 51.500h24M84 51.500h48M84 55h34"/></svg>
  <div class="abs" style="left:21px;top:64px;width:47px;height:23.500px;background:#2e3a34;border:1px solid #111"></div>
  <div class="abs" style="left:29px;top:67px;width:26px;height:17px;background:#7b4fc0"></div>
  <div class="abs" style="left:55px;top:67px;width:9px;height:17px;background:#cfd6c0"></div>
  <div class="abs" style="left:92px;top:65px;width:38.500px;height:23px;background:#c8102e;border:1px solid #111"></div>
  <div class="abs" style="left:96px;top:70px;width:14px;height:12px;background:#e8e0e0;border-radius:2px"></div>
</div>

<div class="tn" style="top:616px;color:#c8452b">8</div>
<div class="abs" style="left:26px;top:615px;width:178px;height:103px;border:2px solid #8f1d2c;border-radius:5px"></div>
<div class="thumb" style="top:617.500px;border-color:transparent;height:98px">
  <div class="abs" style="left:28px;top:3px;width:110px;height:17px;border:1px solid #555;background:#fff"></div>
  <div class="t" style="left:28px;top:9.500px;width:110px;text-align:center;font-size:4.300px;letter-spacing:.6px;color:#333">USER INTERFACE / UI DESIGN</div>
  <div class="abs" style="left:33.500px;top:27.500px;width:99px;height:58.500px;background:#6495ed;border:1px solid #2b3f66"></div>
  <div class="abs" style="left:34.500px;top:28.500px;width:97px;height:1.800px;background:#f4f6fb"></div>
  <div class="abs" style="left:77.500px;top:31.500px;width:11px;height:10px;background:#f3f3f3"></div>
  <div class="abs" style="left:68px;top:56px;width:33px;height:3px;background:#fff"></div>
  <div class="abs" style="left:68px;top:65px;width:33px;height:3px;background:#fff"></div>
  <div class="abs" style="left:80px;top:71.500px;width:8.500px;height:4px;background:#e1e1e1"></div>
  <div class="abs" style="left:61px;top:45px;width:45px;height:1px;background:#4a6fb5"></div>
</div>

<div class="tn" style="top:731px">9</div>
<div class="thumb" style="top:731.500px;height:90px">
  <div class="abs" style="left:17px;top:3px;width:138px;height:90px;background:#6a97ea"></div>
  <div class="abs" style="left:17px;top:3px;width:138px;height:2.500px;background:#e9e9e9"></div>
  <div class="abs" style="left:22px;top:30px;width:47px;height:17px;background:#fff"></div>
  <div class="abs" style="left:22px;top:47px;width:47px;height:32px;background:#a9a9a9"></div>
  <div class="abs" style="left:88px;top:33px;width:53px;height:23px;background:#fff"></div>
  <div class="abs" style="left:88px;top:58px;width:53px;height:24px;background:#fff"></div>
  <div class="abs" style="left:100px;top:36px;width:18px;height:18px;border-radius:9px;background:conic-gradient(#d9480f 0 62%,#3b82e6 62% 78%,#f59f00 78% 100%)"></div>
  <svg style="left:88px;top:58px" width="53" height="24" viewBox="0 0 53 24" fill="#4a90e2"><rect x="8" y="12" width="3" height="9"/><rect x="13" y="9" width="3" height="12"/><rect x="18" y="13" width="3" height="8"/><rect x="23" y="8" width="3" height="13"/><rect x="28" y="11" width="3" height="10"/><rect x="33" y="6" width="3" height="15"/><rect x="38" y="9" width="3" height="12"/></svg>
  <div class="abs" style="left:72px;top:65px;width:13px;height:6px;background:#b7d3c2"></div><div class="abs" style="left:72px;top:72px;width:13px;height:6px;background:#7fbf7f"></div>
  <div class="abs" style="left:23px;top:26px;width:60px;height:2px;background:#dfe7f7"></div><div class="abs" style="left:92px;top:26px;width:42px;height:2px;background:#dfe7f7"></div>
  <div class="abs" style="left:23px;top:31px;width:14px;height:2px;background:#2f6fe0"></div>
</div>
<!-- ===== slide editing area ===== -->
<div class="abs" style="left:341px;top:155px;width:1082px;height:610px;background:#f3f2f2;border:1px solid #d6d4d4"></div>
<div class="abs" style="left:1399px;top:146px;width:0;height:630px;border-left:1px dotted #b5b3b3"></div>
<div class="abs" style="left:236px;top:753px;width:1291px;height:0;border-top:1px dotted #bdbbbb"></div>
<!-- title box -->
<div class="abs" style="left:514.500px;top:172.500px;width:687px;height:107.500px;border:3px solid #3e3e3e;background:#fff"></div>
<div class="t" id="stitle" style="left:514.500px;top:205.500px;width:687px;text-align:center;font-size:30px;letter-spacing:1.450px;color:#262626">USER INTERFACE / UI DESIGN</div>
<!-- login window -->
<div class="abs" style="left:558.500px;top:333px;width:612px;height:357px;background:#6495ed;border:1px solid #20293d"></div>
<div class="abs" style="left:559.500px;top:334px;width:610px;height:14px;background:#fff"></div>
<svg style="left:563px;top:336px" width="9" height="9" viewBox="0 0 9 9"><rect x=".5" y="1" width="5" height="5" fill="#c55a3a"/><rect x="3" y="3" width="5" height="5" fill="#e3a24a"/><rect x="4" y="0" width="3" height="3" fill="#5b7fc7"/></svg>
<div class="t" style="left:574px;top:337.500px;font-size:5.500px;color:#222">Welcome!!!</div>
<svg style="left:1102px;top:336px" width="62" height="9" viewBox="0 0 62 9" fill="none"><path d="M5.500 5h4" stroke="#555" stroke-width=".7"/><rect x="30" y="2.500" width="4" height="4" stroke="#cfcfcf" stroke-width=".6"/><path d="M52.500 2.500l4 4M56.500 2.500l-4 4" stroke="#222" stroke-width=".8"/></svg>
<div class="abs" style="left:832px;top:359.500px;width:67px;height:62.500px;background:#fafafa"></div>
<svg style="left:832.800px;top:360px" width="67" height="63" viewBox="0 0 67 63" fill="none" stroke="#2c2c2c">
  <ellipse cx="33.500" cy="31.200" rx="31.300" ry="29.600" stroke="#111" stroke-width="1.500"/><ellipse cx="33.500" cy="31.200" rx="28.300" ry="26.800" stroke-width=".5"/><ellipse cx="33.500" cy="31.200" rx="26.300" ry="24.900" stroke-width=".4"/>
  <path d="M57.0 31.2L33.5 53.4L10.0 31.2L33.5 9.0Z" stroke-width=".45"/><path d="M53.9 42.3L21.8 50.4L13.1 20.1L45.2 12.0Z" stroke-width=".45"/><path d="M45.2 50.4L13.1 42.3L21.7 12.0L53.9 20.1Z" stroke-width=".45"/><path d="M56.2 36.9L39.6 52.7L16.9 46.9L10.8 25.5L27.4 9.7L50.1 15.5Z" stroke-width=".4"/>
</svg>
<div class="t" style="left:853px;top:386px;font-size:10.500px;letter-spacing:-.3px;color:#111">OEM</div><div class="t" style="left:869px;top:394.500px;font-size:3px;letter-spacing:0;color:#333">KPRU</div>
<div class="t" id="psms" style="left:558.500px;top:431.500px;width:634px;text-align:center;font-size:18px;color:#17233f;letter-spacing:.02px">Product Stock Management System</div>
<div class="t" style="left:652px;top:511.500px;width:100px;text-align:right;font-size:11px;color:#15203c;letter-spacing:0">USER :</div>
<div class="abs" style="left:771.500px;top:508.500px;width:204.500px;height:18.500px;background:#fff"></div>
<div class="t" style="left:652px;top:568.500px;width:100px;text-align:right;font-size:11px;color:#15203c;letter-spacing:0">PASSWORD :</div>
<div class="abs" style="left:771.500px;top:565.500px;width:204.500px;height:18.500px;background:#fff"></div>
<div class="abs" style="left:846px;top:602px;width:52px;height:26px;background:#e1e1e1;border:1px solid #cfcfcf"></div>
<div class="t" style="left:846px;top:612.500px;width:52px;text-align:center;font-size:5.500px;color:#222">LOG IN</div>

<!-- right scrollbar -->
<div class="abs" style="left:1527px;top:146px;width:14px;height:630px;background:#f5f4f4"></div>
<svg style="left:1529px;top:146px" width="10" height="8" viewBox="0 0 10 8"><path d="M5 1l4 5.500h-8z" fill="#666"/></svg>
<div class="abs" style="left:1530.500px;top:390px;width:7px;height:32px;border-radius:3.500px;background:#7a7979"></div>
<svg style="left:1529px;top:724px" width="10" height="36" viewBox="0 0 10 36" fill="#666"><path d="M5 7l4-5.500h-8z"/><path d="M5 13l3.500 4h-7zM5 16.500l3.500 4h-7z"/><path d="M5 34l3.500-4h-7zM5 30.500l3.500-4h-7z"/></svg>

<!-- notes -->
<div class="abs" style="left:236px;top:777.500px;width:1300px;height:1px;background:#e3e1e1"></div>
<div class="t" style="left:243px;top:786px;font-size:12px;color:#6e6e6e">Click to add notes</div>

<!-- status bar -->
<div class="abs" style="left:0;top:816.500px;width:1541px;height:18.500px;background:#f4f3f3"></div>
<div class="t" style="left:10px;top:821px;font-size:9.500px;color:#3a3a3a">Slide 8 of 17</div>
<div class="t" style="left:86px;top:821.500px;font-size:10.500px;color:#222">Thai</div>
<svg style="left:117px;top:819px" width="13" height="13" viewBox="0 0 13 13" class="ic"><circle cx="5" cy="2" r="1.300"/><path d="M1.500 4.500h7M5 4.500v3.500M5 8l-2 4M5 8l1.500 2"/><path d="M7.500 8.500a2.500 2.500 0 1 0 3-2.500M8.500 9.500l1 1 2-2.500" stroke-width=".9"/></svg>
<div class="t" style="left:132px;top:821px;font-size:9.500px;color:#3a3a3a">Accessibility: Good to go</div>
<svg style="left:1195px;top:819px" width="13" height="13" viewBox="0 0 13 13" class="ic"><path d="M1 6.500h11M1 9h11M1 11.500h11M4.500 3.500l2-2 2 2"/></svg>
<div class="t" style="left:1209px;top:821.500px;font-size:9.500px;color:#333">Notes</div>
<svg style="left:1258px;top:820px" width="13" height="11" viewBox="0 0 13 11" class="ic"><rect x="1" y="1" width="11" height="9"/><rect x="4.500" y="3.200" width="5.500" height="3.600"/><path d="M3 1v9"/></svg>
<svg style="left:1291px;top:820px" width="12" height="11" viewBox="0 0 12 11" class="ic"><rect x="1" y="1" width="4" height="3.500"/><rect x="7" y="1" width="4" height="3.500"/><rect x="1" y="6.500" width="4" height="3.500"/><rect x="7" y="6.500" width="4" height="3.500"/></svg>
<svg style="left:1323px;top:820px" width="12" height="11" viewBox="0 0 12 11" class="ic"><path d="M1 1.500h4.500v8.500h-4.500zM6.500 1.500h4.500v8.500h-4.500zM2.500 4h2M2.500 6h2M8 4h2M8 6h2"/></svg>
<div class="abs" style="left:1345.500px;top:817px;width:31.500px;height:18px;background:#e6e4e4"></div>
<svg style="left:1355px;top:820px" width="12" height="12" viewBox="0 0 12 12" class="ic"><path d="M1 1.500h10M2.500 1.500v5h7v-5M6 6.500v3.500M3.500 10.500h5"/></svg>
<div class="t" style="left:1382px;top:820px;font-size:10px;color:#555">–</div>
<div class="abs" style="left:1393px;top:825.500px;width:79px;height:1px;background:#9a9999"></div>
<div class="abs" style="left:1432px;top:821px;width:3.500px;height:10px;background:#555;border-radius:1px"></div>
<div class="t" style="left:1475.500px;top:820.500px;font-size:10px;color:#555">+</div>
<div class="t" style="left:1492.500px;top:822px;font-size:8.500px;color:#444;letter-spacing:-.2px">106%</div>
<svg style="left:1524px;top:819px" width="13" height="13" viewBox="0 0 13 13" class="ic"><rect x="3.500" y="3.500" width="6" height="6"/><path d="M6.500 .5l-2 2h4zM6.500 12.500l-2-2h4zM.5 6.500l2-2v4zM12.500 6.500l-2-2v4z" stroke-width=".8"/></svg>
</div><!-- /#ppt -->
<!-- ===== Windows taskbar ===== -->
<div id="tb">
<!-- widgets -->
<svg style="left:15px;top:13px" width="26" height="24" viewBox="0 0 26 24"><rect x="1" y="1" width="24" height="22" rx="2" fill="#0a5fc2"/><rect x="2.500" y="2.500" width="9" height="19" rx="1" fill="#f2f2f4"/><rect x="13" y="2.500" width="10.500" height="9" fill="#5fd0fa"/><rect x="13" y="11.500" width="10.500" height="5" fill="#2ea3f5"/><rect x="13" y="16.500" width="10.500" height="5" fill="#1a86e8"/></svg>
<!-- start -->
<svg style="left:617px;top:14px" width="23" height="23" viewBox="0 0 23 23"><defs><linearGradient id="wg" x1="0" y1="0" x2="1" y2="1"><stop offset="0" stop-color="#37c1f7"/><stop offset="1" stop-color="#0c7bd9"/></linearGradient></defs><rect x="0" y="0" width="11" height="11" fill="url(#wg)"/><rect x="12" y="0" width="11" height="11" fill="url(#wg)"/><rect x="0" y="12" width="11" height="11" fill="url(#wg)"/><rect x="12" y="12" width="11" height="11" fill="url(#wg)"/></svg>
<!-- search -->
<div class="abs" style="left:654px;top:10px;width:218px;height:30px;border-radius:15px;background:#f0f5fc;border:1px solid #d3dcec;box-shadow:0 1px 1px rgba(120,140,180,.25)"></div>
<svg style="left:663px;top:16px" width="18" height="18" viewBox="0 0 18 18" fill="none" stroke="#222" stroke-width="1.700"><circle cx="10.500" cy="7.500" r="5.300"/><path d="M6.700 11.300L1.800 16.200" stroke-linecap="round"/></svg>
<div class="t" style="left:690px;top:18px;font-size:14px;color:#444">Search</div>
<div class="abs" style="left:818px;top:12px;width:51px;height:26px;border-radius:13px 13px 16px 16px;overflow:hidden;background:linear-gradient(180deg,#bcd3ea 0%,#e6dccf 40%,#c9874f 60%,#7cc5dd 78%,#e9b9a0 100%)">
  <svg style="left:0;top:0" width="51" height="26" viewBox="0 0 51 26"><path d="M6 16l10-10 8 7 9-9 12 12z" fill="#c27b45"/><path d="M16 6l4 3.500-3 1-3-1.500zM33 4l5 5-4-1-3 1z" fill="#f6f1ea"/><path d="M2 19q20-5 40-1 -4 6-22 6t-18-5z" fill="#5ab7d9"/><path d="M30 18q10-2 20 2v6h-22z" fill="#e7b59a"/></svg>
</div>
<!-- task view -->
<svg style="left:884px;top:13px" width="25" height="24" viewBox="0 0 25 24"><rect x="7.500" y="1" width="16" height="14" rx="1.500" fill="#f4f4f4" stroke="#dcdcdc" stroke-width=".6"/><rect x="1" y="7" width="17" height="15.500" rx="1.500" fill="#1d1d1f"/><rect x="7.500" y="7" width="10.500" height="8" fill="#b9b9b9"/></svg>
<!-- chat -->
<svg style="left:927px;top:12px" width="26" height="26" viewBox="0 0 26 26"><path d="M13 2a11 11 0 1 1-5.500 20.500l-5 1.500 1.500-4.500A11 11 0 0 1 13 2z" fill="#6b5fd0"/><circle cx="13" cy="13" r="9" fill="#7f74e4" opacity=".6"/><rect x="7" y="9" width="9" height="8" rx="1.500" fill="#fff"/><path d="M16.500 12l3-2v6l-3-2z" fill="#fff"/></svg>
<!-- explorer -->
<svg style="left:972px;top:13px" width="26" height="23" viewBox="0 0 26 23"><path d="M1 3a1.500 1.500 0 0 1 1.500-1.500h6l2 2.500h13a1.500 1.500 0 0 1 1.500 1.500v15h-24z" fill="#f0b323"/><path d="M1 7h24v14.500a1 1 0 0 1-1 1h-22a1 1 0 0 1-1-1z" fill="#fbd45c"/><rect x="6" y="16" width="14" height="6.500" rx="1" fill="#1e7fd0"/><rect x="6" y="16" width="14" height="2.500" fill="#3a9ae6"/></svg>
<div class="abs" style="left:982px;top:42px;width:5px;height:2.500px;border-radius:1.500px;background:#8b8e96"></div>
<!-- edge -->
<svg style="left:1017px;top:13px" width="25" height="25" viewBox="0 0 25 25"><circle cx="12.500" cy="12.500" r="12" fill="#1b74c9"/><path d="M1 10a12 12 0 0 1 23.500 2c0 4-3 6-6 6-3 0-4-1.500-4-3 0-1 .8-1.500.8-2.500 0-2-2-3.500-4.500-3.500C6 9 2.500 12 1 16z" fill="#3fc4a6"/><path d="M1 10a12 12 0 0 1 14-9c5 1 8 5 8.500 8 -2-3-6-5-11-4S3 10 1.500 15z" fill="#2fa3dd"/><path d="M9 14c0 4 3 8 8 8.500a12 12 0 0 1-14-4c0-3 2-6 6-7z" fill="#0f559e"/></svg>
<div class="abs" style="left:1026.500px;top:42px;width:5px;height:2.500px;border-radius:1.500px;background:#8b8e96"></div>
<!-- store -->
<svg style="left:1060px;top:13px" width="25" height="25" viewBox="0 0 25 25"><path d="M8 6v-2.500a1.500 1.500 0 0 1 1.500-1.500h6a1.500 1.500 0 0 1 1.500 1.500V6" fill="none" stroke="#2ea3e6" stroke-width="1.800"/><path d="M1 6h23v15a3 3 0 0 1-3 3h-17a3 3 0 0 1-3-3z" fill="#1c4f8f"/><rect x="8" y="10" width="4" height="4" fill="#f25022"/><rect x="13" y="10" width="4" height="4" fill="#7fba00"/><rect x="8" y="15" width="4" height="4" fill="#00a4ef"/><rect x="13" y="15" width="4" height="4" fill="#ffb900"/></svg>
<!-- firefox -->
<svg style="left:1104px;top:12px" width="25" height="26" viewBox="0 0 25 26"><circle cx="12.500" cy="14" r="11.500" fill="#ff8a1f"/><path d="M16 1c1 3 4 4 6 8 2 5 0 11-4 13 6-6 1-13-2-14 0-3 0-5 0-7z" fill="#ffd43a"/><path d="M2 9c2-4 5-5 7-4-2 1-2 3-1 4z" fill="#ff5a2a"/><circle cx="12" cy="13.500" r="5.500" fill="#7a3fd0"/><path d="M7 11c2-2 6-2 8 0-1 2-3 2-4 2s-3-1-4-2z" fill="#ff9a1f"/><path d="M1.500 17a11.500 11.500 0 0 0 22 0c-3 5-10 7-15 4s-6-3-7-4z" fill="#ff4f5e"/></svg>
<!-- riot -->
<svg style="left:1148px;top:13px" width="25" height="25" viewBox="0 0 25 25"><circle cx="12.500" cy="12.500" r="12" fill="#e0102a"/><path d="M5.500 8.500l11.500-3 1.500 10.500-3 .5-.5-6-1 .2.300 6-2.500.3-.5-5.800-1 .2.200 5.500-2.800-.5zM14 17.500l4.500.7-.3 1.800-4-.8z" fill="#fff"/></svg>
<div class="abs" style="left:1158.500px;top:42px;width:5px;height:2.500px;border-radius:1.500px;background:#8b8e96"></div>
<!-- chrome -->
<svg style="left:1192px;top:13px" width="25" height="25" viewBox="0 0 25 25"><circle cx="12.500" cy="12.500" r="12" fill="#fbc02d"/><path d="M12.500 .5a12 12 0 0 1 10.400 6H12.500a6 6 0 0 0-5.200 3L2.100 6.500A12 12 0 0 1 12.500.5z" fill="#e53935"/><path d="M2.100 6.500l5.200 9a6 6 0 0 0 5.200 3l-3.500 5.700A12 12 0 0 1 2.100 6.500z" fill="#34a853"/><circle cx="12.500" cy="12.500" r="5.600" fill="#fff"/><circle cx="12.500" cy="12.500" r="4.400" fill="#4285f4"/></svg>
<div class="abs" style="left:1202px;top:42px;width:5px;height:2.500px;border-radius:1.500px;background:#8b8e96"></div>
<!-- zoom (active) -->
<div class="abs" style="left:1230px;top:6px;width:35px;height:38px;border-radius:4px;background:rgba(255,255,255,.55);border:1px solid rgba(255,255,255,.7)"></div>
<svg style="left:1236px;top:13px" width="25" height="25" viewBox="0 0 25 25"><circle cx="12.500" cy="12.500" r="12" fill="#1f5fe8"/><ellipse cx="12.500" cy="9" rx="10" ry="7" fill="#3a7bff" opacity=".5"/></svg>
<div class="t" style="left:1241.500px;top:18.500px;font-size:11px;font-weight:700;color:#fff;letter-spacing:-.4px">zm</div>
<div class="abs" style="left:1241px;top:41px;width:16px;height:3px;border-radius:1.500px;background:#1a73d9"></div>
<!-- word -->
<svg style="left:1281px;top:13px" width="24" height="25" viewBox="0 0 24 25"><rect x="9" y="3.500" width="14" height="18" fill="#fff" stroke="#3c66ad" stroke-width="1"/><path d="M12 7.500h9M12 10.500h9M12 13.500h9M12 16.500h9" stroke="#3c66ad" stroke-width="1.200"/><path d="M1 3.500l13-2.500v23l-13-2.500z" fill="#2b579a"/></svg>
<div class="t" style="left:1284px;top:19px;font-size:10px;font-weight:700;color:#fff">W</div>
<div class="abs" style="left:1290.500px;top:42px;width:5px;height:2.500px;border-radius:1.500px;background:#8b8e96"></div>
<!-- tray -->
<svg style="left:1691px;top:19px" width="16" height="10" viewBox="0 0 16 10" fill="none" stroke="#1b1b1b" stroke-width="1.400"><path d="M2 8.500l6-6 6 6"/></svg>
<div class="t" style="left:1721px;top:20.500px;font-size:11px">ENG</div>
<svg style="left:1762.500px;top:16.700px" width="18" height="18" viewBox="0 0 18 18" fill="none" stroke="#1b1b1b" stroke-width="1.150"><path d="M11.300 2H1V12.500H13"/><path d="M6.800 12.500V15.600M10.600 12.500V15.600M4.800 15.600H15"/><rect x="13.100" y="1.200" width="3.200" height="4.400" rx="1"/><path d="M13.100 3H16.300M14.700 5.600V15.600"/></svg>
<svg style="left:1786px;top:17px" width="18" height="16" viewBox="0 0 18 16" fill="none" stroke="#1b1b1b" stroke-width="1.100"><path d="M1.500 5.500h2.500l3.500-3.500v12l-3.500-3.500h-2.500z"/><path d="M10 5.500a4 4 0 0 1 0 5M12 3.500a7 7 0 0 1 0 9M14 1.500a10 10 0 0 1 0 13"/></svg>
<div class="t" style="left:1800px;top:11.500px;width:76px;text-align:right;font-size:11.500px;letter-spacing:-.5px">11:43</div>
<div class="t" style="left:1800px;top:27.500px;width:76px;text-align:right;font-size:11.500px">21/10/2568</div>
<svg style="left:1885px;top:17.400px" width="16" height="16" viewBox="0 0 16 16" fill="none" stroke="#1b1b1b" stroke-width="1.150" stroke-linejoin="round"><path d="M7.500 1.200C12 2.500 14.500 6 13.500 10C12.500 13.500 8 15.500 2 12.200C6 12 8.500 8 7.500 1.200Z"/></svg>
</div>
</body>
</html>
